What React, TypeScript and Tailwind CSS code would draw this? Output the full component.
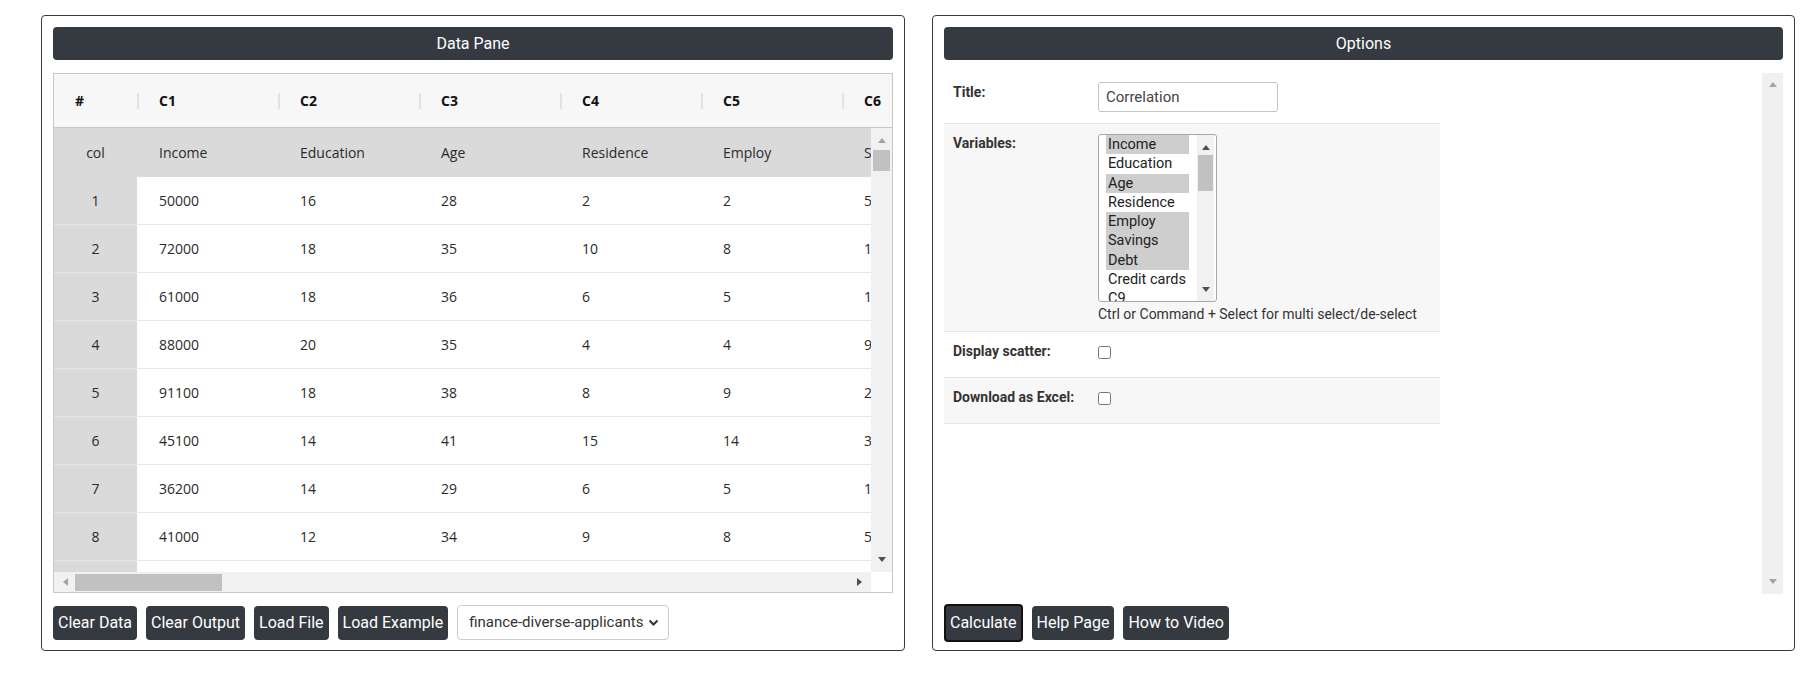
import React from 'react';

const columns = ['C1', 'C2', 'C3', 'C4', 'C5', 'C6'];
const names = ['Income', 'Education', 'Age', 'Residence', 'Employ', 'Savings'];
const rows = [
    ['50000', '16', '28', '2', '2', '5000'],
    ['72000', '18', '35', '10', '8', '12000'],
    ['61000', '18', '36', '6', '5', '15000'],
    ['88000', '20', '35', '4', '4', '9000'],
    ['91100', '18', '38', '8', '9', '20000'],
    ['45100', '14', '41', '15', '14', '3000'],
    ['36200', '14', '29', '6', '5', '1000'],
    ['41000', '12', '34', '9', '8', '5500'],
];

const variables = [
    { name: 'Income', selected: true },
    { name: 'Education', selected: false },
    { name: 'Age', selected: true },
    { name: 'Residence', selected: false },
    { name: 'Employ', selected: true },
    { name: 'Savings', selected: true },
    { name: 'Debt', selected: true },
    { name: 'Credit cards', selected: false },
    { name: 'C9', selected: false },
];

const Arrow = ({ dir, color = '#a3a3a3' }: { dir: 'up' | 'down' | 'left' | 'right'; color?: string }) => {
    const pts = {
        up: '0,5 4,0 8,5',
        down: '0,0 8,0 4,5',
        left: '5,0 5,8 0,4',
        right: '0,0 0,8 5,4',
    }[dir];
    const vertical = dir === 'up' || dir === 'down';
    return (
        <svg width={vertical ? 8 : 5} height={vertical ? 5 : 8} viewBox={vertical ? '0 0 8 5' : '0 0 5 8'}>
            <polygon points={pts} fill={color} />
        </svg>
    );
};

const PanelHeader = ({ title }: { title: string }) => (
    <div className="h-[33px] shrink-0 rounded-[4px] bg-[#343a40] text-white text-[16px] flex items-center justify-center">
        {title}
    </div>
);

const DarkButton = ({ label, focused }: { label: string; focused?: boolean }) => (
    <button
        type="button"
        className={
            focused
                ? 'bg-[#343a40] text-white text-[16px] leading-[24px] px-[4px] py-[5px] rounded-[4px] border-2 border-[#111]'
                : 'bg-[#343a40] text-white text-[16px] leading-[24px] px-[5px] py-[5px] rounded-[4px]'
        }
    >
        {label}
    </button>
);

const DataTable = () => (
    <div className="h-[520px] shrink-0 border border-[#c8c8c8] flex flex-col overflow-hidden font-['Open_Sans',sans-serif] text-[14px]">
        {/* column header */}
        <div className="h-[54px] shrink-0 flex bg-[#f7f7f7] border-b border-[#c8c8c8] overflow-hidden">
            <div className="w-[83px] shrink-0 flex items-center pl-[21px] font-bold text-[#111]">#</div>
            {columns.map((c) => (
                <div key={c} className="w-[141px] shrink-0 flex items-center">
                    <div className="w-[2px] h-[16px] bg-[#e3e3e3]" />
                    <span className="pl-[20px] font-bold text-[#111]">{c}</span>
                </div>
            ))}
        </div>

        <div className="flex flex-1 min-h-0">
            <div className="flex-1 overflow-hidden text-[#2a2a2a]">
                <div className="h-[49px] flex bg-[#dadada]">
                    <div className="w-[83px] shrink-0 flex items-center justify-center">col</div>
                    {names.map((n) => (
                        <div key={n} className="w-[141px] shrink-0 flex items-center pl-[22px] overflow-hidden whitespace-nowrap">{n}</div>
                    ))}
                </div>
                {rows.map((r, i) => (
                    <div key={i} className="h-[48px] flex bg-white border-b border-[#e6e6e6]">
                        <div className="w-[83px] shrink-0 flex items-center justify-center bg-[#dadada]">{i + 1}</div>
                        {r.map((v, j) => (
                            <div key={j} className="w-[141px] shrink-0 flex items-center pl-[22px] whitespace-nowrap">{v}</div>
                        ))}
                    </div>
                ))}
                <div className="h-[48px] flex bg-white">
                    <div className="w-[83px] shrink-0 bg-[#dadada]" />
                </div>
            </div>
            {/* vertical scrollbar */}
            <div className="w-[21px] shrink-0 bg-[#f1f1f1] flex flex-col items-center pt-[10px] pb-[10px]">
                <Arrow dir="up" />
                <div className="mt-[7px] w-[17px] h-[21px] bg-[#c1c1c1]" />
                <div className="flex-1" />
                <Arrow dir="down" color="#505050" />
            </div>
        </div>

        {/* horizontal scrollbar */}
        <div className="h-[20px] shrink-0 flex">
            <div className="flex-1 bg-[#f1f1f1] flex items-center pl-[9px] pr-[9px]">
                <Arrow dir="left" />
                <div className="ml-[7px] w-[147px] h-[17px] bg-[#c1c1c1]" />
                <div className="flex-1" />
                <Arrow dir="right" color="#505050" />
            </div>
            <div className="w-[21px] bg-white" />
        </div>
    </div>
);

const OptionsForm = () => (
    <div className="h-[521px] shrink-0 flex text-[#333]">
        <div className="flex-1 bg-white">
            <div className="w-[496px]">
                <div className="h-[51px] flex bg-white border-b border-[#e6e6e6]">
                    <div className="w-[154px] shrink-0 pl-[9px] pt-[9px] leading-[20px] text-[14px] font-bold">Title:</div>
                    <div className="pt-[9px]">
                        <input
                            type="text"
                            value="Correlation"
                            readOnly
                            className="w-[180px] h-[30px] border border-[#c4c4c4] rounded-[3px] px-[7px] text-[15px] text-[#444] outline-none"
                        />
                    </div>
                </div>

                <div className="h-[208px] flex bg-[#f7f7f7] border-b border-[#e6e6e6]">
                    <div className="w-[154px] shrink-0 pl-[9px] pt-[9px] leading-[20px] text-[14px] font-bold">Variables:</div>
                    <div className="pt-[10px]">
                        <div className="w-[119px] h-[168px] border border-[#a9a9a9] rounded-[3px] bg-white flex pl-[7px] pr-[2px] overflow-hidden">
                            <div className="w-[83px] shrink-0 text-[14.5px] text-[#222] leading-[19.3px]">
                                {variables.map((v) => (
                                    <div key={v.name} className={v.selected ? 'bg-[#cecece] pl-[2px] whitespace-nowrap' : 'pl-[2px] whitespace-nowrap'}>
                                        {v.name}
                                    </div>
                                ))}
                            </div>
                            <div className="ml-[8px] w-[17px] shrink-0 bg-[#f1f1f1] flex flex-col items-center pt-[10px] pb-[9px]">
                                <Arrow dir="up" color="#505050" />
                                <div className="mt-[5px] w-[15px] h-[36px] bg-[#c1c1c1]" />
                                <div className="flex-1" />
                                <Arrow dir="down" color="#505050" />
                            </div>
                        </div>
                        <div className="mt-[2px] text-[14px] leading-[20px] whitespace-nowrap">
                            Ctrl or Command + Select for multi select/de-select
                        </div>
                    </div>
                </div>

                <div className="h-[46px] flex bg-white border-b border-[#e6e6e6]">
                    <div className="w-[154px] shrink-0 pl-[9px] pt-[9px] leading-[20px] text-[14px] font-bold">Display scatter:</div>
                    <div className="pt-[14px]">
                        <input type="checkbox" className="block w-[13px] h-[13px] m-0" />
                    </div>
                </div>

                <div className="h-[46px] flex bg-[#f7f7f7] border-b border-[#e6e6e6]">
                    <div className="w-[154px] shrink-0 pl-[9px] pt-[9px] leading-[20px] text-[14px] font-bold whitespace-nowrap">Download as Excel:</div>
                    <div className="pt-[14px]">
                        <input type="checkbox" className="block w-[13px] h-[13px] m-0" />
                    </div>
                </div>
            </div>
        </div>
        {/* vertical scrollbar, nothing to scroll */}
        <div className="w-[21px] shrink-0 bg-[#f0f0f0] flex flex-col items-center justify-between pt-[9px] pb-[10px]">
            <Arrow dir="up" />
            <Arrow dir="down" />
        </div>
    </div>
);

export default function App() {
    return (
        <div className="w-[1806px] h-[691px] bg-white font-['Roboto',sans-serif]">
            <div className="flex gap-[27px] pl-[41px] pt-[15px]">
                {/* data pane */}
                <div className="w-[864px] h-[636px] border border-[#3a3a3a] rounded-[4px] p-[11px] pb-[10px] flex flex-col">
                    <PanelHeader title="Data Pane" />
                    <div className="mt-[13px]">
                        <DataTable />
                    </div>
                    <div className="mt-[12px] flex items-center gap-[9px]">
                        <DarkButton label="Clear Data" />
                        <DarkButton label="Clear Output" />
                        <DarkButton label="Load File" />
                        <DarkButton label="Load Example" />
                        <div className="w-[212px] h-[35px] border border-[#ccc] rounded-[4px] bg-white flex items-center justify-between pl-[11px] pr-[9px] text-[15px] text-[#333]">
                            <span>finance-diverse-applicants</span>
                            <svg width="11" height="7" viewBox="0 0 11 7">
                                <polyline points="1.5,1.5 5.5,5.5 9.5,1.5" fill="none" stroke="#333" strokeWidth="2" />
                            </svg>
                        </div>
                    </div>
                </div>

                {/* options */}
                <div className="w-[863px] h-[636px] border border-[#3a3a3a] rounded-[4px] p-[11px] pb-[10px] flex flex-col">
                    <PanelHeader title="Options" />
                    <div className="mt-[13px]">
                        <OptionsForm />
                    </div>
                    <div className="mt-[10px] flex items-center gap-[9px]">
                        <DarkButton label="Calculate" focused />
                        <DarkButton label="Help Page" />
                        <DarkButton label="How to Video" />
                    </div>
                </div>
            </div>
        </div>
    );
}
